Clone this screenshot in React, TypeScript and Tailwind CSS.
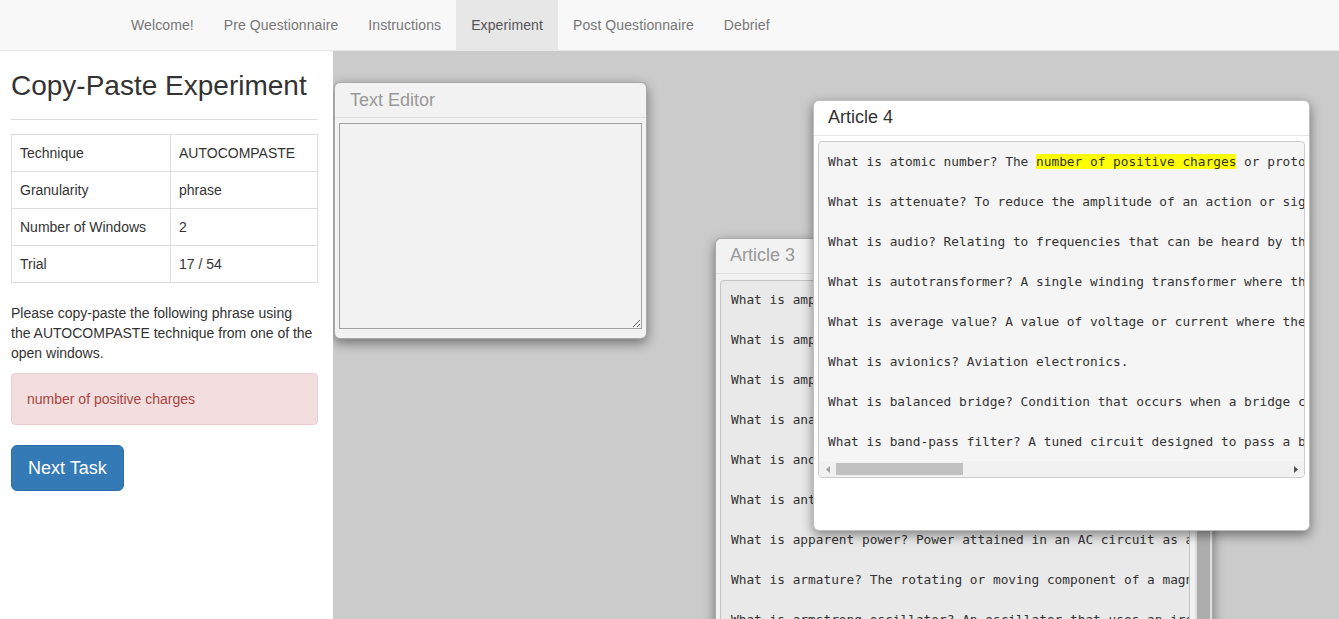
import React from 'react';

const NAV_ITEMS = ['Welcome!', 'Pre Questionnaire', 'Instructions', 'Experiment', 'Post Questionnaire', 'Debrief'];

const ARTICLE_3 = [
  'What is ampere? The unit of electric current flow.',
  'What is ampere-hour? A unit of electric charge in a battery.',
  'What is amplifier? A device that enlarges the input signal.',
  'What is analog? A signal that varies continuously over time.',
  'What is anode? The positive electrode of a tube or diode.',
  'What is antenna? A device for radiating or receiving radio waves.',
  'What is apparent power? Power attained in an AC circuit as a product of voltage and current.',
  'What is armature? The rotating or moving component of a magnetic circuit.',
  'What is armstrong oscillator? An oscillator that uses an iron core transformer.',
];

const ARTICLE_4 = [
  'What is attenuate? To reduce the amplitude of an action or signal.',
  'What is audio? Relating to frequencies that can be heard by the human ear.',
  'What is autotransformer? A single winding transformer where the input and output share turns.',
  'What is average value? A value of voltage or current where the area above equals the area below.',
  'What is avionics? Aviation electronics.',
  'What is balanced bridge? Condition that occurs when a bridge circuit has zero output.',
  'What is band-pass filter? A tuned circuit designed to pass a band of frequencies.',
];

const INFO_ROWS = [
  ['Technique', 'AUTOCOMPASTE'],
  ['Granularity', 'phrase'],
  ['Number of Windows', '2'],
  ['Trial', '17 / 54'],
];

const mono = "font-['DejaVu_Sans_Mono',monospace] text-[12.8px] leading-[20px] whitespace-pre";

export default function App() {
  return (
    <div className="h-screen overflow-hidden bg-white font-['Liberation_Sans',Arial,sans-serif] text-[14px] text-[#333]">
      {/* top nav */}
      <nav className="flex h-[51px] border-b border-[#e7e7e7] bg-[#f8f8f8] pl-[116px]">
        {NAV_ITEMS.map(item => (
          <div
            key={item}
            className={`flex h-[50px] items-center px-[15px] leading-[20px] tracking-[0.1px] ${item === 'Experiment' ? 'bg-[#e7e7e7] text-[#555]' : 'text-[#777]'}`}
          >
            {item}
          </div>
        ))}
      </nav>

      <div className="flex h-[calc(100vh-51px)]">
        {/* instructions column */}
        <aside className="w-[333px] shrink-0 bg-white pl-[11px] pr-[15px]">
          <h2 className="mt-[18px] whitespace-nowrap text-[28px] leading-[33px] text-[#333]">Copy-Paste Experiment</h2>
          <hr className="mt-[17px] border-t border-[#ddd]" />
          <table className="mt-[14px] w-full border-collapse">
            <tbody>
              {INFO_ROWS.map(([k, v]) => (
                <tr key={k}>
                  <td className="w-[159px] border border-[#ddd] px-[8px] py-[8px] leading-[20px]">{k}</td>
                  <td className="border border-[#ddd] px-[8px] py-[8px] leading-[20px]">{v}</td>
                </tr>
              ))}
            </tbody>
          </table>
          <p className="mt-[20px] whitespace-nowrap leading-[20px]">
            Please copy-paste the following phrase using<br />
            the AUTOCOMPASTE technique from one of the<br />
            open windows.
          </p>
          <div className="mt-[10px] rounded-[4px] border border-[#ebccd1] bg-[#f2dede] px-[15px] py-[15px] leading-[20px] text-[#a94442]">
            number of positive charges
          </div>
          <button className="mt-[20px] rounded-[6px] border border-[#2e6da4] bg-[#337ab7] px-[16px] py-[10px] text-[18px] leading-[24px] text-white">
            Next Task
          </button>
        </aside>

        {/* window canvas */}
        <main className="relative flex-1 overflow-hidden bg-[#cbcbcb]">
          {/* Text Editor */}
          <div className="absolute left-[1px] top-[31px] flex h-[257px] w-[313px] flex-col rounded-[6px] border border-black/30 bg-[#f2f2f2] shadow-[0_4px_12px_rgba(0,0,0,0.45)]">
            <div className="h-[35px] shrink-0 border-b border-[#dedede] px-[15px] text-[18px] leading-[34px] text-[#999]">Text Editor</div>
            <textarea className="mx-[4px] mt-[5px] h-[206px] resize border border-[#a0a0a0] bg-[#f2f2f2] outline-none" />
          </div>

          {/* Article 3 (behind) */}
          <div className="absolute left-[382px] top-[187px] flex h-[440px] w-[498px] flex-col rounded-[6px] border border-black/30 bg-[#f2f2f2] shadow-[0_4px_12px_rgba(0,0,0,0.45)]">
            <div className="h-[35px] shrink-0 border-b border-[#e0e0e0] px-[14px] text-[18px] leading-[33px] text-[#999]">Article 3</div>
            <div className="flex flex-1">
              <div className="ml-[4px] mt-[6px] w-[470px] overflow-hidden rounded-[4px] border border-[#c4c4c4] bg-[#e9e9e9] pl-[10px] pt-[9px]">
                {ARTICLE_3.map(line => (
                  <div key={line} className={`${mono} mb-[20px]`}>{line}</div>
                ))}
              </div>
              <div className="ml-[5px] w-[17px] bg-[#dedede] px-[2px] pt-[6px]">
                <div className="h-full bg-[#adadad]" />
              </div>
            </div>
          </div>

          {/* Article 4 (active) */}
          <div className="absolute left-[480px] top-[49px] flex h-[431px] w-[497px] flex-col rounded-[6px] border border-black/25 bg-white shadow-[0_4px_12px_rgba(0,0,0,0.45)]">
            <div className="h-[35px] shrink-0 border-b border-[#e5e5e5] px-[14px] text-[18px] leading-[33px] text-[#333]">Article 4</div>
            <div className="mx-[4px] mt-[5px] overflow-hidden rounded-[4px] border border-[#ccc] bg-[#f5f5f5]">
              <div className="h-[319px] overflow-hidden pl-[9px] pt-[10px]">
                <div className={`${mono} mb-[20px]`}>
                  What is atomic number? The <span className="bg-[#ffff00]">number of positive charges</span> or protons in the nucleus.
                </div>
                {ARTICLE_4.map(line => (
                  <div key={line} className={`${mono} mb-[20px]`}>{line}</div>
                ))}
              </div>
              {/* horizontal scrollbar */}
              <div className="flex h-[16px] items-center bg-[#f1f1f1]">
                <div className="flex w-[17px] justify-center">
                  <svg width="4" height="7" viewBox="0 0 4 7"><path d="M4 0 L0 3.5 L4 7 Z" fill="#a3a3a3" /></svg>
                </div>
                <div className="h-[12px] w-[127px] bg-[#c1c1c1]" />
                <div className="flex-1" />
                <div className="flex w-[17px] justify-center">
                  <svg width="4" height="7" viewBox="0 0 4 7"><path d="M0 0 L4 3.5 L0 7 Z" fill="#505050" /></svg>
                </div>
              </div>
            </div>
          </div>
        </main>
      </div>
    </div>
  );
}
